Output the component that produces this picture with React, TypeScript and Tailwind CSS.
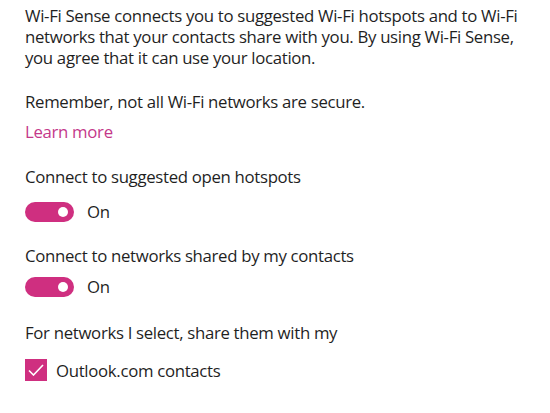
function Toggle() {
  return (
    <div className="flex items-center gap-[13px]">
      <div className="flex h-[20px] w-[49px] items-center justify-end rounded-full bg-[#cf2f80] pr-[6px]">
        <div className="h-[10px] w-[10px] rounded-full bg-white" />
      </div>
      <span>On</span>
    </div>
  );
}

export default function App() {
  return (
    <div
      className="min-h-screen bg-white px-[25px] pt-[5px] text-[16.8px] leading-[21px] tracking-[-0.32px] text-[#1f1f1f]"
      style={{ fontFamily: '"Open Sans", "Noto Sans", sans-serif' }}
    >
      <p className="whitespace-nowrap">
        Wi-Fi Sense connects you to suggested Wi-Fi hotspots and to Wi-Fi
        <br />
        networks that your contacts share with you. By using Wi-Fi Sense,
        <br />
        you agree that it can use your location.
      </p>
      <p className="mt-[23px]">Remember, not all Wi-Fi networks are secure.</p>
      <a className="mt-[9px] block text-[#c4388a]">Learn more</a>

      <p className="mt-[24px]">Connect to suggested open hotspots</p>
      <div className="mt-[14px]">
        <Toggle />
      </div>

      <p className="mt-[23px]">Connect to networks shared by my contacts</p>
      <div className="mt-[10px]">
        <Toggle />
      </div>

      <p className="mt-[25px]">For networks I select, share them with my</p>
      <div className="mt-[16px] flex items-center gap-[9px]">
        <div className="flex h-[22px] w-[22px] items-center justify-center bg-[#cf2f80]">
          <svg width="16" height="12" viewBox="0 0 16 12" fill="none">
            <path d="M1 6.5 L5.5 11 L15 1" stroke="white" strokeWidth="1.6" />
          </svg>
        </div>
        <span>Outlook.com contacts</span>
      </div>
    </div>
  );
}
